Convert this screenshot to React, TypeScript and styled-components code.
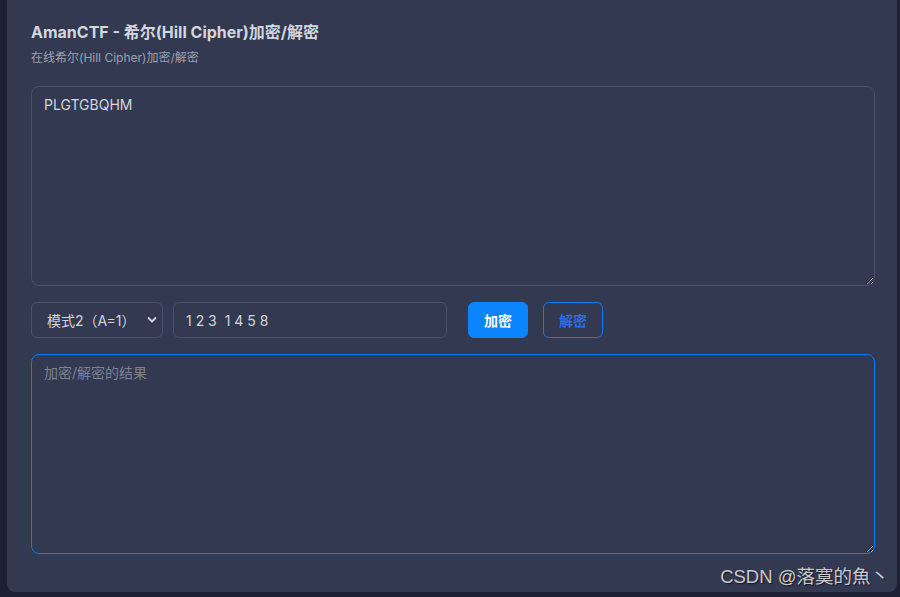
import React from "react";
import styled, { createGlobalStyle } from "styled-components";

const Global = createGlobalStyle`
  html, body { margin: 0; padding: 0; background: #1b2037; }
  body { font-family: "Inter", "Noto Sans CJK SC", sans-serif; }
  * { box-sizing: border-box; }
`;

const Page = styled.div`
  width: 900px;
  height: 597px;
  padding: 0 3px 5px 7px;
  background: #1b2037;
`;

const Card = styled.div`
  position: relative;
  height: 100%;
  background: #323951;
  border-radius: 0 0 8px 8px;
  padding: 21px 22px 0 24px;
  display: flex;
  flex-direction: column;
`;

const Title = styled.h1`
  margin: 0;
  font-size: 16px;
  line-height: 22px;
  font-weight: 700;
  color: #d3d6de;
`;

const Subtitle = styled.p`
  margin: 7px 0 0;
  font-size: 12px;
  line-height: 16px;
  color: #9ba1b1;
`;

const Area = styled.textarea<{ $focus?: boolean }>`
  display: block;
  width: 100%;
  height: 200px;
  margin: 0;
  padding: 8px 12px;
  background: #323951;
  border: 1px solid ${(p) => (p.$focus ? "#0d7bf2" : "#4a5069")};
  border-radius: 8px;
  color: #d3d6de;
  font-family: "Inter", "Noto Sans CJK SC", sans-serif;
  font-size: 14px;
  line-height: 20px;
  resize: vertical;
  outline: none;
  &::placeholder { color: #7c8293; }
`;

const Top = styled.div`
  margin-top: 20px;
`;

const Row = styled.div`
  display: flex;
  align-items: center;
  margin: 16px 0;
`;

const SelectWrap = styled.div`
  position: relative;
  width: 132px;
  height: 36px;
  flex: none;
`;

const Select = styled.select`
  width: 100%;
  height: 100%;
  appearance: none;
  -webkit-appearance: none;
  background: #323951;
  border: 1px solid #4a5069;
  border-radius: 6px;
  color: #d3d6de;
  padding: 0 0 0 15px;
  font-family: "Inter", "Noto Sans CJK SC", sans-serif;
  font-size: 14px;
  outline: none;
`;

const Chevron = styled.svg`
  position: absolute;
  right: 6px;
  top: 14px;
  pointer-events: none;
`;

const KeyInput = styled.input`
  width: 274px;
  height: 36px;
  margin-left: 10px;
  background: #323951;
  border: 1px solid #4a5069;
  border-radius: 6px;
  color: #d3d6de;
  padding: 0 12px;
  font-family: "Inter", "Noto Sans CJK SC", sans-serif;
  font-size: 14px;
  outline: none;
`;

const Button = styled.button<{ $primary?: boolean; $gap: number }>`
  width: 60px;
  height: 36px;
  margin-left: ${(p) => p.$gap}px;
  padding: 0 0 1px;
  border-radius: 6px;
  font-family: "Noto Sans CJK SC", sans-serif;
  font-size: 14px;
  font-weight: 700;
  cursor: pointer;
  background: ${(p) => (p.$primary ? "#0a84ff" : "transparent")};
  color: ${(p) => (p.$primary ? "#ffffff" : "#2b6fe0")};
  border: 1px solid ${(p) => (p.$primary ? "#0a84ff" : "#1479f0")};
`;

const Watermark = styled.div`
  position: absolute;
  right: 8px;
  bottom: 4px;
  font-family: "Liberation Sans", "Noto Sans CJK SC", sans-serif;
  font-size: 18.5px;
  color: #c9cacf;
  text-shadow: 1px 1px 1px rgba(0, 0, 0, 0.6);
`;

export default function App() {
  return (
    <>
      <Global />
      <Page>
        <Card>
          <Title>AmanCTF - 希尔(Hill Cipher)加密/解密</Title>
          <Subtitle>在线希尔(Hill Cipher)加密/解密</Subtitle>
          <Top>
            <Area defaultValue="PLGTGBQHM" />
          </Top>
          <Row>
            <SelectWrap>
              <Select defaultValue="2">
                <option value="1">模式1（A=0）</option>
                <option value="2">模式2（A=1）</option>
              </Select>
              <Chevron width="10" height="8" viewBox="0 0 10 8">
                <path d="M1.5 2 L5 5.5 L8.5 2" fill="none" stroke="#d3d6de" strokeWidth="1.8" strokeLinecap="round" strokeLinejoin="round" />
              </Chevron>
            </SelectWrap>
            <KeyInput defaultValue="1 2 3  1 4 5 8" />
            <Button $primary $gap={21}>加密</Button>
            <Button $gap={15}>解密</Button>
          </Row>
          <Area $focus placeholder="加密/解密的结果" />
          <Watermark>CSDN @落寞的魚丶</Watermark>
        </Card>
      </Page>
    </>
  );
}
